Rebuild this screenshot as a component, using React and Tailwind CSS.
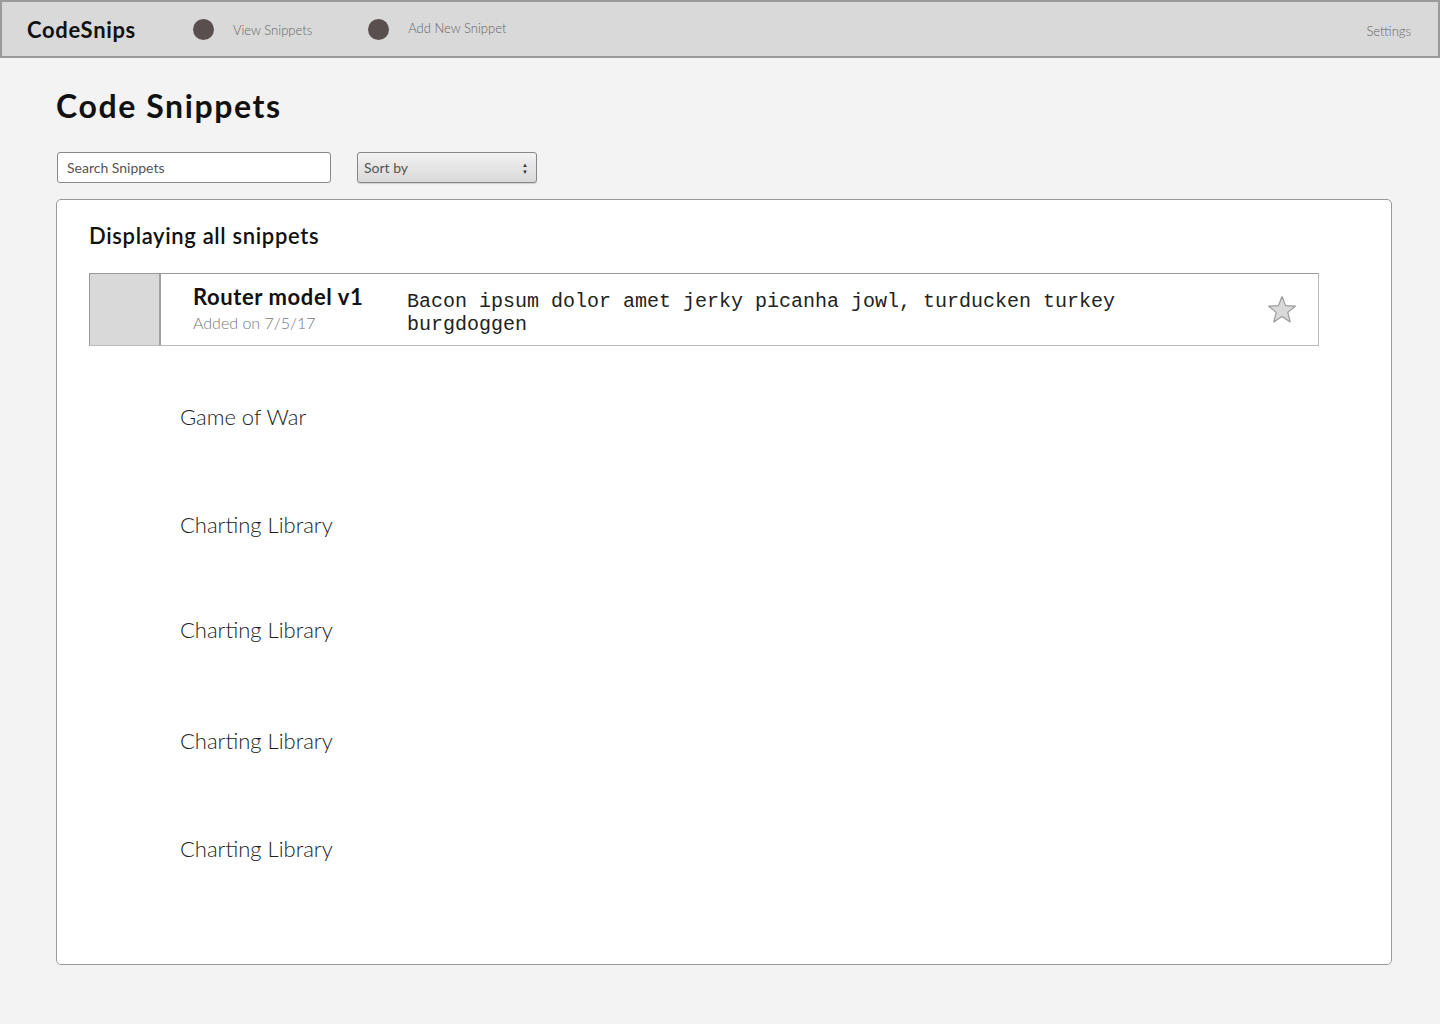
import React from "react";

const SANS = { fontFamily: "Lato, 'Open Sans', sans-serif" };

function Star() {
  return (
    <svg width="30" height="29" viewBox="0 0 30 29">
      <path
        d="M15 1.5 L18.6 10.6 L28.3 11.2 L20.8 17.4 L23.2 26.9 L15 21.6 L6.8 26.9 L9.2 17.4 L1.7 11.2 L11.4 10.6 Z"
        fill="#d9d9d9"
        stroke="#9a9a9a"
        strokeWidth="1.2"
        strokeLinejoin="round"
      />
    </svg>
  );
}

const items = [
  { label: "Game of War", mt: "mt-[57px]" },
  { label: "Charting Library", mt: "mt-[80px]" },
  { label: "Charting Library", mt: "mt-[77px]" },
  { label: "Charting Library", mt: "mt-[83px]" },
  { label: "Charting Library", mt: "mt-[80px]" },
];

export default function App() {
  return (
    <div className="min-h-[1024px] bg-[#f3f3f3] text-[#111]" style={SANS}>
      {/* Top bar */}
      <header className="h-[58px] flex items-center bg-[#d9d9d9] border-2 border-[#9a9a9a]">
        <span className="ml-[25px] text-[22px] font-bold tracking-[0.03em]">CodeSnips</span>
        <div className="ml-[57px] flex items-center">
          <span className="w-[21px] h-[21px] rounded-full bg-[#5a4f4f]" />
          <span className="ml-[19px] mt-[3px] text-[13px] font-light text-[#666]">View Snippets</span>
        </div>
        <div className="ml-[56px] flex items-center">
          <span className="w-[21px] h-[21px] rounded-full bg-[#5a4f4f]" />
          <span className="ml-[19px] -mt-[1px] text-[13px] font-light text-[#666]">Add New Snippet</span>
        </div>
        <span className="ml-auto mr-[27px] mt-[5px] text-[13px] font-light text-[#666]">Settings</span>
      </header>

      <main className="pl-[56px] pr-[48px]">
        <h1 className="pt-[28px] text-[32px] leading-[40px] font-bold tracking-[0.05em]">Code Snippets</h1>

        <div className="mt-[26px] flex items-center">
          <div className="ml-[1px] w-[274px] h-[31px] bg-white border border-[#888] rounded-[3px] flex items-center px-[9px] text-[14px] text-[#555]">
            Search Snippets
          </div>
          <div className="ml-[26px] w-[180px] h-[31px] border border-[#888] rounded-[3px] flex items-center px-[6px] text-[14px] text-[#555] bg-gradient-to-b from-[#f2f2f2] to-[#d9d9d9] shadow-[0_1px_1px_rgba(0,0,0,0.15)]">
            <span>Sort by</span>
            <span className="ml-auto flex flex-col items-center text-[6px] leading-[7px] text-[#333] mr-[2px]">
              <span>▲</span>
              <span>▼</span>
            </span>
          </div>
        </div>

        <section className="mt-[16px] h-[766px] bg-white border border-[#9a9a9a] rounded-[5px] pl-[32px] pr-[72px]">
          <h2 className="pt-[22px] text-[22px] leading-[28px] font-semibold tracking-[0.03em]">Displaying all snippets</h2>

          <div className="mt-[23px] h-[73px] flex border border-[#9a9a9a] border-b-[#bbb] border-r-[#bbb]">
            <div className="w-[71px] bg-[#d9d9d9] border-r-2 border-[#a0a0a0]" />
            <div className="ml-[32px] w-[214px] flex flex-col justify-center">
              <div className="text-[22px] leading-[26px] font-bold tracking-[0.027em] -mt-[1px]">Router model v1</div>
              <div className="text-[16px] leading-[22px] mt-[2px] font-light text-[#777]">Added on 7/5/17</div>
            </div>
            <div
              className="flex-1 pt-[16px] text-[20px] leading-[23px] text-[#222] pr-[100px]"
              style={{ fontFamily: "'Liberation Mono', 'Courier New', monospace" }}
            >
              Bacon ipsum dolor amet jerky picanha jowl, turducken turkey burgdoggen
            </div>
            <div className="w-[60px] flex items-center justify-center mr-[6px]">
              <Star />
            </div>
          </div>

          <ul className="pl-[91px]">
            {items.map((it, i) => (
              <li key={i} className={`${it.mt} text-[22px] leading-[28px] font-light text-[#222]`}>
                {it.label}
              </li>
            ))}
          </ul>
        </section>
      </main>
    </div>
  );
}
